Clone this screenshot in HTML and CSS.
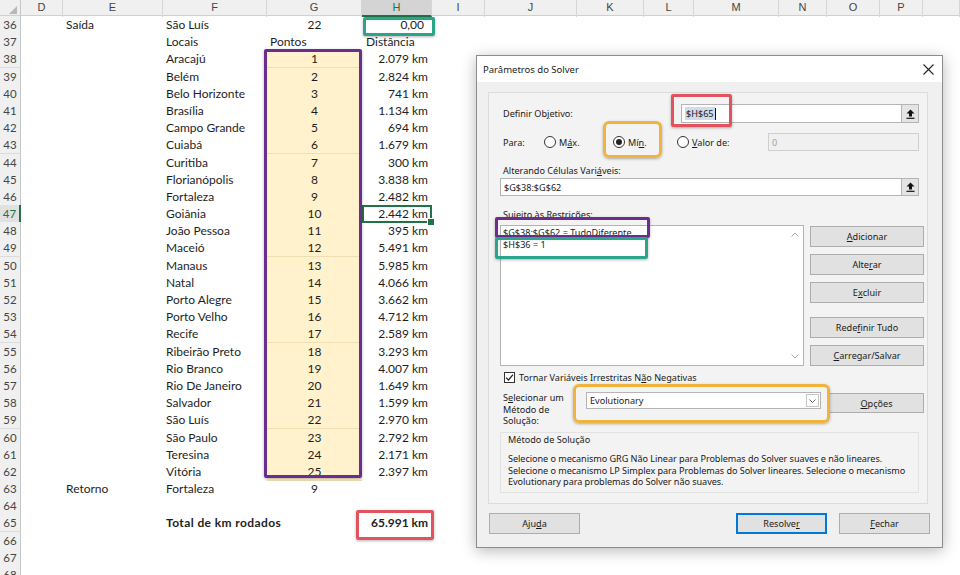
FILE: index.html
```html
<!DOCTYPE html>
<html lang="pt-BR">
<head>
    <meta charset="UTF-8">
    <title>Solver - Rota</title>
    <link rel="stylesheet" href="styles.css">
</head>
<body>
    <div class="sheet">
        <div class="col-head">
            <span class="corner"></span><span>D</span><span>E</span><span>F</span><span>G</span><span class="sel-col">H</span><span>I</span><span>J</span><span>K</span><span>L</span><span>M</span><span>N</span><span>O</span><span>P</span><span></span>
        </div>
        <div class="row"><span class="rh">36</span><span class="e">Saída</span><span class="f">São Luís</span><span class="g">22</span><span class="h zero">0,00</span></div>
        <div class="row"><span class="rh">37</span><span class="f">Locais</span><span class="g left">Pontos</span><span class="h left">Distância</span></div>
        <div class="row"><span class="rh">38</span><span class="f">Aracajú</span><span class="g fill">1</span><span class="h">2.079 km</span></div>
        <div class="row"><span class="rh">39</span><span class="f">Belém</span><span class="g fill">2</span><span class="h">2.824 km</span></div>
        <div class="row"><span class="rh">40</span><span class="f">Belo Horizonte</span><span class="g fill">3</span><span class="h">741 km</span></div>
        <div class="row"><span class="rh">41</span><span class="f">Brasília</span><span class="g fill">4</span><span class="h">1.134 km</span></div>
        <div class="row"><span class="rh">42</span><span class="f">Campo Grande</span><span class="g fill">5</span><span class="h">694 km</span></div>
        <div class="row"><span class="rh">43</span><span class="f">Cuiabá</span><span class="g fill">6</span><span class="h">1.679 km</span></div>
        <div class="row"><span class="rh">44</span><span class="f">Curitiba</span><span class="g fill">7</span><span class="h">300 km</span></div>
        <div class="row"><span class="rh">45</span><span class="f">Florianópolis</span><span class="g fill">8</span><span class="h">3.838 km</span></div>
        <div class="row"><span class="rh">46</span><span class="f">Fortaleza</span><span class="g fill">9</span><span class="h">2.482 km</span></div>
        <div class="row"><span class="rh active">47</span><span class="f">Goiânia</span><span class="g fill">10</span><span class="h current">2.442 km</span></div>
        <div class="row"><span class="rh">48</span><span class="f">João Pessoa</span><span class="g fill">11</span><span class="h">395 km</span></div>
        <div class="row"><span class="rh">49</span><span class="f">Maceió</span><span class="g fill">12</span><span class="h">5.491 km</span></div>
        <div class="row"><span class="rh">50</span><span class="f">Manaus</span><span class="g fill">13</span><span class="h">5.985 km</span></div>
        <div class="row"><span class="rh">51</span><span class="f">Natal</span><span class="g fill">14</span><span class="h">4.066 km</span></div>
        <div class="row"><span class="rh">52</span><span class="f">Porto Alegre</span><span class="g fill">15</span><span class="h">3.662 km</span></div>
        <div class="row"><span class="rh">53</span><span class="f">Porto Velho</span><span class="g fill">16</span><span class="h">4.712 km</span></div>
        <div class="row"><span class="rh">54</span><span class="f">Recife</span><span class="g fill">17</span><span class="h">2.589 km</span></div>
        <div class="row"><span class="rh">55</span><span class="f">Ribeirão Preto</span><span class="g fill">18</span><span class="h">3.293 km</span></div>
        <div class="row"><span class="rh">56</span><span class="f">Rio Branco</span><span class="g fill">19</span><span class="h">4.007 km</span></div>
        <div class="row"><span class="rh">57</span><span class="f">Rio De Janeiro</span><span class="g fill">20</span><span class="h">1.649 km</span></div>
        <div class="row"><span class="rh">58</span><span class="f">Salvador</span><span class="g fill">21</span><span class="h">1.599 km</span></div>
        <div class="row"><span class="rh">59</span><span class="f">São Luís</span><span class="g fill">22</span><span class="h">2.970 km</span></div>
        <div class="row"><span class="rh">60</span><span class="f">São Paulo</span><span class="g fill">23</span><span class="h">2.792 km</span></div>
        <div class="row"><span class="rh">61</span><span class="f">Teresina</span><span class="g fill">24</span><span class="h">2.171 km</span></div>
        <div class="row"><span class="rh">62</span><span class="f">Vitória</span><span class="g fill">25</span><span class="h">2.397 km</span></div>
        <div class="row"><span class="rh">63</span><span class="e">Retorno</span><span class="f">Fortaleza</span><span class="g">9</span></div>
        <div class="row"><span class="rh">64</span></div>
        <div class="row"><span class="rh">65</span><span class="f bold">Total de km rodados</span><span class="h bold">65.991 km</span></div>
        <div class="row"><span class="rh">66</span></div>
        <div class="row"><span class="rh">67</span></div>
        <div class="row"><span class="rh">68</span></div>
    </div>

    <!-- marker boxes drawn over the sheet and the dialog -->
    <div class="mark teal" style="left:363px;top:17px;width:72px;height:19px"></div>
    <div class="mark purple" style="left:264px;top:49px;width:98px;height:429px"></div>
    <div class="mark red" style="left:356px;top:510px;width:78px;height:30px"></div>

    <div class="dialog">
        <div class="dlg-title">
            <span>Parâmetros do Solver</span>
            <svg class="close" width="11" height="11" viewBox="0 0 11 11"><path d="M0.5 0.5 L10.5 10.5 M10.5 0.5 L0.5 10.5" stroke="#222" stroke-width="1.1" fill="none"/></svg>
        </div>
        <div class="dlg-body">
            <div class="group">
                <div class="line objective">
                    <label>Definir Ob<u>j</u>etivo:</label>
                    <div class="field obj-field">
                        <span class="text"><span class="picked">$H$65</span><span class="caret"></span></span>
                        <span class="ref-btn"><svg width="9" height="10" viewBox="0 0 9 10"><path d="M4.5 0.5 L8.5 4.5 H6 V7.5 H3 V4.5 H0.5 Z" fill="#111"/><path d="M0.5 9.3 H8.5" stroke="#111" stroke-width="1.2"/></svg></span>
                    </div>
                </div>
                <div class="line para">
                    <label class="para-label">Para:</label>
                    <span class="opt opt-max"><span class="radio"></span><span>M<u>á</u>x.</span></span>
                    <span class="opt opt-min"><span class="radio on"></span><span>Mí<u>n</u>.</span></span>
                    <span class="opt opt-val"><span class="radio"></span><span><u>V</u>alor de:</span></span>
                    <div class="field val-field disabled"><span class="text">0</span></div>
                </div>
                <label class="caption vars-caption">Alterando Células Vari<u>á</u>veis:</label>
                <div class="field vars-field">
                    <span class="text">$G$38:$G$62</span>
                    <span class="ref-btn"><svg width="9" height="10" viewBox="0 0 9 10"><path d="M4.5 0.5 L8.5 4.5 H6 V7.5 H3 V4.5 H0.5 Z" fill="#111"/><path d="M0.5 9.3 H8.5" stroke="#111" stroke-width="1.2"/></svg></span>
                </div>
                <label class="caption rules-caption">Sujei<u>t</u>o às Restrições:</label>
                <div class="rules">
                    <div class="rule-list">
                        <div class="items">
                            <div>$G$38:$G$62 = TudoDiferente</div>
                            <div>$H$36 = 1</div>
                        </div>
                        <div class="scroll">
                            <svg width="8" height="5" viewBox="0 0 8 5"><path d="M0.5 4.5 L4 1 L7.5 4.5" stroke="#a8a8a8" fill="none"/></svg>
                            <svg width="8" height="5" viewBox="0 0 8 5"><path d="M0.5 0.5 L4 4 L7.5 0.5" stroke="#a8a8a8" fill="none"/></svg>
                        </div>
                    </div>
                    <div class="rule-btns">
                        <span class="btn"><u>A</u>dicionar</span>
                        <span class="btn">Alte<u>r</u>ar</span>
                        <span class="btn">E<u>x</u>cluir</span>
                        <span class="btn gap">Rede<u>f</u>inir Tudo</span>
                        <span class="btn"><u>C</u>arregar/Salvar</span>
                    </div>
                </div>
                <div class="line check-line">
                    <span class="check"><svg width="9" height="9" viewBox="0 0 9 9"><path d="M1 4.6 L3.5 7 L8 1.6" stroke="#222" stroke-width="1.2" fill="none"/></svg></span>
                    <span>Tornar Variáveis Irrestritas N<u>ã</u>o Negativas</span>
                </div>
                <div class="line method">
                    <label class="method-label">S<u>e</u>lecionar um<br>Método de<br>Solução:</label>
                    <div class="select">
                        <span class="text">Evolutionary</span>
                        <span class="drop"><svg width="7" height="4" viewBox="0 0 7 4"><path d="M0.5 0.5 L3.5 3.5 L6.5 0.5" stroke="#666" fill="none"/></svg></span>
                    </div>
                    <span class="btn opt-btn"><u>O</u>pções</span>
                </div>
                <div class="method-info">
                    <div class="info-title">Método de Solução</div>
                    <p>Selecione o mecanismo GRG Não Linear para Problemas do Solver suaves e não lineares.<br>Selecione o mecanismo LP Simplex para Problemas do Solver lineares. Selecione o mecanismo<br>Evolutionary para problemas do Solver não suaves.</p>
                </div>
            </div>
            <div class="footer">
                <span class="btn">Aju<u>d</u>a</span>
                <span class="spacer"></span>
                <span class="btn default">Resolve<u>r</u></span>
                <span class="btn"><u>F</u>echar</span>
            </div>
        </div>
    </div>

    <div class="mark red" style="left:671px;top:94px;width:61px;height:33px"></div>
    <div class="mark orange" style="left:603px;top:121px;width:59px;height:37px"></div>
    <div class="mark purple" style="left:495px;top:217px;width:155px;height:21px"></div>
    <div class="mark teal" style="left:495px;top:237px;width:153px;height:22px"></div>
    <div class="mark orange" style="left:573px;top:384px;width:257px;height:39px"></div>
</body>
</html>
```

FILE: styles.css
```css
* {
    box-sizing: border-box;
}
body {
    margin: 0;
    width: 960px;
    height: 575px;
    overflow: hidden;
    position: relative;
    background: #fff;
    font-family: Lato, "Open Sans", sans-serif;
}

/* spreadsheet */
.sheet {
    font-size: 12px;
    color: #1e1e1e;
}
.col-head, .row {
    display: grid;
    grid-template-columns: 21px 42px 100px 104px 95px 70px 53px 92px 67px 50px 85px 48px 53px 43px 1fr;
}
.col-head {
    height: 16px;
    background: #f0f0f0;
    border-bottom: 1px solid #d0d0d0;
    font-family: "Liberation Sans", Arial, sans-serif;
    font-size: 11px;
    color: #444;
}
.col-head span {
    border-right: 1px solid #d6d6d6;
    text-align: center;
    line-height: 15px;
}
.col-head .corner {
    position: relative;
    border-right: 1px solid #c6c6c6;
}
.col-head .corner::after {
    content: "";
    position: absolute;
    right: 3px;
    bottom: 3px;
    border-left: 8px solid transparent;
    border-bottom: 8px solid #b8b8b8;
}
.col-head .sel-col {
    background: #d4d4d4;
    color: #217346;
    border-bottom: 2px solid #217346;
}
.row {
    height: 17.2px;
    line-height: 17px;
}
.bold {
    font-weight: bold;
}
.f.bold {
    letter-spacing: 0.4px;
}
.rh {
    grid-column: 1;
    background: #f0f0f0;
    border-right: 1px solid #c6c6c6;
    border-bottom: 1px solid #dcdcdc;
    text-align: center;
    font-size: 11.5px;
    color: #444;
}
.rh.active {
    background: #e1e1e1;
    color: #217346;
    border-right: 2px solid #217346;
}
.e {
    grid-column: 3;
    padding-left: 3px;
}
.f {
    grid-column: 4;
    padding-left: 3px;
    white-space: nowrap;
}
.g {
    grid-column: 5;
    text-align: center;
}
.g.left {
    text-align: left;
    padding-left: 3px;
}
.g.fill {
    background: #fff2cc;
    border-bottom: 1px solid #efdfb2;
}
.h {
    grid-column: 6;
    text-align: right;
    padding-right: 4px;
    white-space: nowrap;
}
.h.left {
    text-align: left;
    padding-left: 4px;
}
.h.zero {
    padding-right: 8px;
}
.h.current {
    position: relative;
    box-shadow: inset 0 0 0 2px #217346;
}
.h.current::after {
    content: "";
    position: absolute;
    right: -3px;
    bottom: -3px;
    width: 6px;
    height: 6px;
    background: #217346;
    border: 1px solid #fff;
}

/* highlight boxes */
.mark {
    position: absolute;
    border: 3px solid;
    border-radius: 2px;
    box-shadow: 0 1px 3px rgba(0, 0, 0, 0.3);
}
.mark.teal {
    border-color: #2aa58c;
}
.mark.purple {
    border-color: #6b2e8f;
}
.mark.red {
    border-color: #e2535d;
}
.mark.orange {
    border-color: #f0b43c;
    border-radius: 6px;
}

/* solver dialog */
.dialog {
    position: absolute;
    left: 476px;
    top: 55px;
    width: 467px;
    height: 493px;
    background: #f0f0f0;
    border: 1px solid #8c8c8c;
    box-shadow: 0 3px 14px rgba(0, 0, 0, 0.28);
    font-family: "Noto Sans", "Open Sans", sans-serif;
    font-size: 9.1px;
    color: #1a1a1a;
}
.dlg-title {
    height: 26px;
    background: #fff;
    display: flex;
    align-items: center;
    justify-content: space-between;
    padding: 0 8px 0 6px;
    font-size: 9.5px;
}
.dlg-body {
    padding: 10px 0 0 11px;
}
.group {
    width: 440px;
    height: 412px;
    border: 1px solid #dcdcdc;
    background: #f3f3f3;
    padding: 11px 0 0 0;
}
.line {
    display: flex;
    align-items: center;
}
label {
    display: block;
}
.field {
    display: flex;
    align-items: center;
    background: #fff;
    border: 1px solid #b4b4b4;
}
.field .text {
    flex: 1;
    padding-left: 3px;
    display: flex;
    align-items: center;
}
.ref-btn {
    width: 17px;
    height: 100%;
    display: flex;
    align-items: center;
    justify-content: center;
    background: #e4e4e4;
    border-left: 1px solid #b4b4b4;
}
.objective {
    height: 19px;
    padding-left: 14px;
}
.obj-field {
    margin-left: auto;
    margin-right: 8px;
    width: 238px;
    height: 19px;
}
.picked {
    background: #cfdcea;
    padding: 0 1px;
}
.caret {
    width: 1px;
    height: 12px;
    background: #111;
}
.para {
    height: 18px;
    margin-top: 10px;
    padding-left: 14px;
}
.para-label {
    width: 41px;
}
.opt {
    display: flex;
    align-items: center;
    gap: 3px;
}
.opt-max {
    width: 69px;
}
.opt-min {
    width: 64px;
}
.opt-val {
    width: 91px;
}
.radio {
    width: 12px;
    height: 12px;
    border: 1px solid #333;
    border-radius: 50%;
    background: #fff;
    position: relative;
}
.radio.on::after {
    content: "";
    position: absolute;
    left: 2px;
    top: 2px;
    width: 6px;
    height: 6px;
    border-radius: 50%;
    background: #222;
}
.val-field {
    width: 151px;
    height: 18px;
}
.field.disabled {
    background: #f0f0f0;
    border-color: #cfcfcf;
    color: #a0a0a0;
}
.caption {
    padding-left: 14px;
    line-height: 12px;
}
.vars-caption {
    margin-top: 14px;
}
.vars-field {
    margin: 1px 0 0 11px;
    width: 419px;
    height: 18px;
}
.rules-caption {
    margin-top: 13px;
}
.rules {
    display: flex;
    margin-top: 4px;
    height: 141px;
}
.rule-list {
    margin-left: 11px;
    width: 304px;
    height: 141px;
    background: #fff;
    border: 1px solid #b4b4b4;
    display: flex;
}
.items {
    flex: 1;
    padding: 1px 0 0 2px;
    line-height: 11.5px;
}
.scroll {
    width: 16px;
    display: flex;
    flex-direction: column;
    justify-content: space-between;
    align-items: center;
    padding: 6px 0 6px;
}
.rule-btns {
    margin-left: 6px;
    margin-top: 1px;
    display: flex;
    flex-direction: column;
    gap: 7px;
}
.btn {
    display: flex;
    align-items: center;
    justify-content: center;
    height: 21px;
    background: #e1e1e1;
    border: 1px solid #adadad;
}
.rule-btns .btn {
    width: 114px;
}
.rule-btns .btn.gap {
    margin-top: 7px;
}
.check-line {
    margin-top: 5px;
    height: 12px;
    padding-left: 15px;
    gap: 4px;
}
.check {
    width: 11px;
    height: 11px;
    border: 1px solid #333;
    background: #fff;
    display: flex;
    align-items: center;
    justify-content: center;
}
.method {
    margin-top: 9px;
    align-items: flex-start;
    height: 35px;
    padding-left: 14px;
}
.method-label {
    width: 83px;
    line-height: 11.5px;
    white-space: nowrap;
}
.select {
    display: flex;
    align-items: center;
    width: 235px;
    height: 17px;
    background: #fff;
    border: 1px solid #b4b4b4;
}
.select .text {
    flex: 1;
    padding-left: 3px;
}
.drop {
    width: 13px;
    height: 13px;
    margin-right: 1px;
    border: 1px solid #c8c8c8;
    display: flex;
    align-items: center;
    justify-content: center;
}
.opt-btn {
    width: 95px;
    height: 20px;
    margin-left: 8px;
    margin-top: 1px;
}
.method-info {
    margin: 5px 0 0 11px;
    width: 419px;
    height: 61px;
    border: 1px solid #e2e2e2;
    background: #f3f3f3;
    padding: 1px 7px;
}
.info-title {
    line-height: 12px;
}
.method-info p {
    margin: 7px 0 0;
    line-height: 11.6px;
    white-space: nowrap;
    letter-spacing: -0.05px;
}
.footer {
    display: flex;
    gap: 12px;
    margin-top: 9px;
    padding-left: 1px;
    width: 442px;
}
.footer .btn {
    width: 91px;
}
.footer .spacer {
    flex: 1;
}
.footer .btn.default {
    border-color: #0078d7;
    box-shadow: inset 0 0 0 1px #0078d7;
}
```
